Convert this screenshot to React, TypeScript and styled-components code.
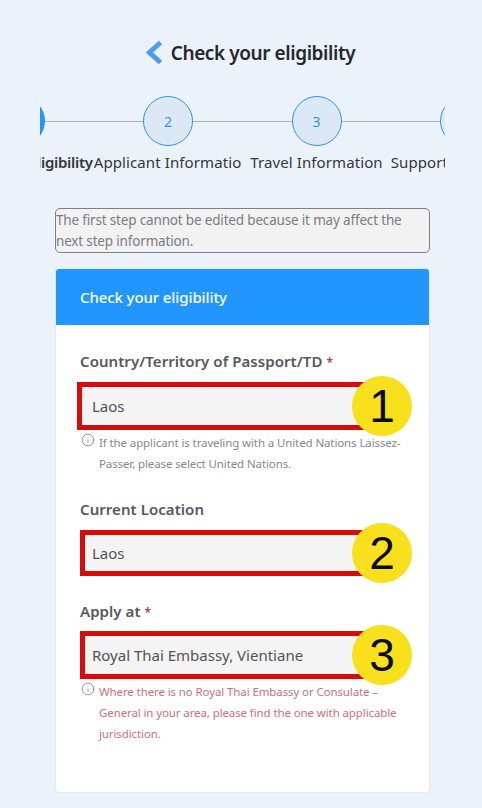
import { Info } from "lucide-react";
import styled, { createGlobalStyle } from "styled-components";

const GlobalStyle = createGlobalStyle`
  html, body {
    margin: 0;
    padding: 0;
    background: #ebf2f9;
    font-family: "Noto Sans", "Liberation Sans", sans-serif;
  }
`;

const Page = styled.div`
  width: 482px;
  height: 808px;
  overflow: hidden;
  padding-top: 37px;
  box-sizing: border-box;
`;

const Header = styled.div`
  display: flex;
  align-items: center;
  justify-content: center;
  gap: 8px;
  height: 32px;
  padding-left: 18px;
`;

const Title = styled.h1`
  margin: 0;
  font-size: 19px;
  font-weight: 600;
  letter-spacing: -0.42px;
  color: #24272c;
`;

const StepperViewport = styled.div`
  width: 405px;
  margin: 27px 0 0 40px;
  overflow: hidden;
`;

const StepperTrack = styled.div`
  display: flex;
  margin-left: -94.75px;
  width: 594px;
`;

const Step = styled.div`
  position: relative;
  width: 148.5px;
  flex: none;
  display: flex;
  flex-direction: column;
  align-items: center;

  &::before {
    content: "";
    position: absolute;
    top: 25px;
    left: 0;
    right: 0;
    height: 1px;
    background: #a9b4bf;
  }
`;

const Circle = styled.div<{ $active?: boolean }>`
  position: relative;
  width: 50px;
  height: 50px;
  box-sizing: border-box;
  border-radius: 50%;
  border: 1px solid #2f93e6;
  background: ${({ $active }) => ($active ? "#2196ff" : "#dbe9f7")};
  color: #3a93e0;
  font-size: 14px;
  display: flex;
  align-items: center;
  justify-content: center;
`;

const StepLabel = styled.div<{ $active?: boolean }>`
  width: 148.5px;
  margin-top: 5px;
  height: 22px;
  line-height: 22px;
  font-size: 15px;
  font-weight: ${({ $active }) => ($active ? 600 : 400)};
  letter-spacing: ${({ $active }) => ($active ? "-0.3px" : "0.1px")};
  color: #33373c;
  white-space: nowrap;
  overflow: hidden;
  text-align: center;
`;

const Notice = styled.div`
  box-sizing: border-box;
  width: 375px;
  height: 45px;
  margin: 35px 0 0 55px;
  padding-top: 1px;
  border: 1px solid #7d7f82;
  border-radius: 5px;
  background: #f2f2f2;
  color: #7a7c7f;
  font-size: 13.5px;
  line-height: 21px;
  letter-spacing: -0.17px;
`;

const Card = styled.section`
  width: 373px;
  height: 523px;
  margin: 16px 0 0 56px;
  box-sizing: border-box;
  background: #fff;
  border-radius: 3px;
  box-shadow: 0 0 2px rgba(90, 110, 130, 0.2);
  overflow: hidden;
`;

const CardHeader = styled.div`
  height: 56px;
  padding-left: 24px;
  display: flex;
  align-items: center;
  background: #2196ff;
  color: #fff;
  font-size: 15px;
  font-weight: 500;
  letter-spacing: -0.1px;
`;

const CardBody = styled.div`
  padding: 26px 24px 0;
`;

const Group = styled.div<{ $gap: number }>`
  margin-bottom: ${({ $gap }) => $gap}px;
`;

const Label = styled.label<{ $after?: number }>`
  display: block;
  height: 20px;
  line-height: 20px;
  margin-bottom: ${({ $after = 11 }) => $after}px;
  font-size: 15px;
  font-weight: 600;
  letter-spacing: 0.06px;
  color: #55585c;
`;

const Required = styled.span`
  margin-left: 4px;
  font-size: 12px;
  color: #c8334a;
`;

const FieldWrap = styled.div`
  position: relative;
`;

const Field = styled.div<{ $outset?: boolean; $height: number }>`
  box-sizing: border-box;
  width: ${({ $outset }) => ($outset ? 290 : 287)}px;
  height: ${({ $height }) => $height}px;
  margin-left: ${({ $outset }) => ($outset ? -3 : 0)}px;
  padding-left: ${({ $outset }) => ($outset ? 10 : 7)}px;
  display: flex;
  align-items: center;
  border: 5px solid #d90a0a;
  background: #f4f4f5;
  color: #4f5357;
  font-size: 15px;
`;

const Badge = styled.div`
  position: absolute;
  left: 272px;
  top: 50%;
  width: 60px;
  height: 60px;
  margin-top: -30px;
  border-radius: 50%;
  background: #f8e01c;
  color: #0a0a0a;
  font-family: "Liberation Sans", Arial, sans-serif;
  font-size: 46px;
  line-height: 60px;
  text-align: center;
`;

const Hint = styled.div<{ $error?: boolean }>`
  display: flex;
  gap: 4px;
  margin: 2px 0 0 1px;
  color: ${({ $error }) => ($error ? "#d0707a" : "#85888c")};
  font-size: 11.5px;
  line-height: 21px;
  letter-spacing: -0.11px;

  svg {
    flex: none;
    margin-top: 1px;
    color: #85888c;
  }
`;

function BackIcon() {
  return (
    <svg width="18" height="26" viewBox="0 0 18 26">
      <path
        d="M15.5 2.5 L4.5 12.5 L15.5 22.5"
        fill="none"
        stroke="#4a9fe8"
        strokeWidth="5"
        strokeLinejoin="miter"
      />
    </svg>
  );
}

const steps = [
  { label: "Check your eligibility", active: true },
  { label: "Applicant Information", number: "2" },
  { label: "Travel Information", number: "3" },
  { label: "Supporting Documents", number: "4" },
];

export default function App() {
  return (
    <Page>
      <GlobalStyle />
      <Header>
        <BackIcon />
        <Title>Check your eligibility</Title>
      </Header>

      <StepperViewport>
        <StepperTrack>
          {steps.map((step) => (
            <Step key={step.label}>
              <Circle $active={step.active}>{step.number}</Circle>
              <StepLabel $active={step.active}>{step.label}</StepLabel>
            </Step>
          ))}
        </StepperTrack>
      </StepperViewport>

      <Notice>
        The first step cannot be edited because it may affect the next step
        information.
      </Notice>

      <Card>
        <CardHeader>Check your eligibility</CardHeader>
        <CardBody>
          <Group $gap={25}>
            <Label>
              Country/Territory of Passport/TD<Required>*</Required>
            </Label>
            <FieldWrap>
              <Field $outset $height={48}>
                Laos
              </Field>
              <Badge>1</Badge>
            </FieldWrap>
            <Hint>
              <Info size={14} strokeWidth={1.5} />
              <span>
                If the applicant is traveling with a United Nations
                Laissez-Passer, please select United Nations.
              </span>
            </Hint>
          </Group>

          <Group $gap={25}>
            <Label>Current Location</Label>
            <FieldWrap>
              <Field $height={46}>Laos</Field>
              <Badge>2</Badge>
            </FieldWrap>
          </Group>

          <Group $gap={0}>
            <Label $after={10}>
              Apply at<Required>*</Required>
            </Label>
            <FieldWrap>
              <Field $height={48}>Royal Thai Embassy, Vientiane</Field>
              <Badge>3</Badge>
            </FieldWrap>
            <Hint $error>
              <Info size={14} strokeWidth={1.5} />
              <span>
                Where there is no Royal Thai Embassy or Consulate – General in
                your area, please find the one with applicable jurisdiction.
              </span>
            </Hint>
          </Group>
        </CardBody>
      </Card>
    </Page>
  );
}
